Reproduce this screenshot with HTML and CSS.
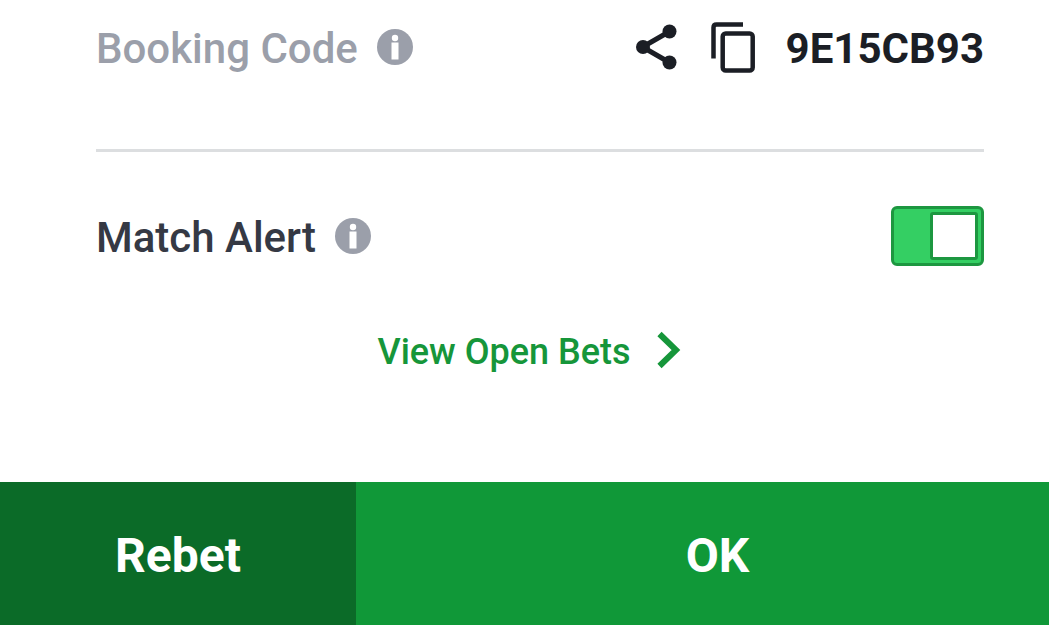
FILE: index.html
```
<!DOCTYPE html>
<html lang="en">
<head>
<meta charset="utf-8">
<meta name="viewport" content="width=device-width, initial-scale=1">
<title>Booking Code</title>
<link rel="stylesheet" href="styles.css">
</head>
<body>
<main class="sheet">
  <section class="row row-booking">
    <div class="label label-muted">
      <span class="label-text">Booking Code</span>
      <button class="icon-button" type="button" aria-label="About booking code">
        <svg class="info" viewBox="0 0 36 36"><circle cx="18" cy="18" r="18" fill="#9b9faa"/><circle cx="18" cy="9" r="3.200" fill="#fff"/><path d="M14.500 13.500h7v17h-7z" fill="#fff"/></svg>
      </button>
    </div>
    <div class="actions">
      <button class="icon-button" type="button" aria-label="Share">
        <svg class="share" viewBox="0 0 42 46"><path d="M33.500 7.500 6.500 23l27 15.500" fill="none" stroke="#1b1e25" stroke-width="5"/><g fill="#1b1e25"><circle cx="33.500" cy="7.500" r="7"/><circle cx="7" cy="23" r="7"/><circle cx="33.500" cy="38.500" r="7"/></g></svg>
      </button>
      <button class="icon-button" type="button" aria-label="Copy">
        <svg class="copy" viewBox="0 0 44 52"><g fill="none" stroke="#1b1e25"><path d="M3.500 37.500V6.500q0-3 3-3H33" stroke-width="4.500"/><rect x="12.700" y="12.500" width="30" height="37" rx="3" stroke-width="4.500"/></g></svg>
      </button>
      <span class="code">9E15CB93</span>
    </div>
  </section>
  <section class="row row-alert">
    <div class="label">
      <label class="label-text" for="match-alert">Match Alert</label>
      <button class="icon-button" type="button" aria-label="About match alert">
        <svg class="info" viewBox="0 0 36 36"><circle cx="18" cy="18" r="18" fill="#9b9faa"/><circle cx="18" cy="9" r="3.200" fill="#fff"/><path d="M14.500 13.500h7v17h-7z" fill="#fff"/></svg>
      </button>
    </div>
    <input class="switch" id="match-alert" type="checkbox" role="switch" checked>
  </section>
  <div class="link-row">
    <a class="open-bets" href="#open-bets">
      <span class="open-bets-text">View Open Bets</span>
      <svg class="chevron" viewBox="0 0 24 36"><path d="M2.500 2 19 18 2.500 34" fill="none" stroke="#16963a" stroke-width="6"/></svg>
    </a>
  </div>
</main>
<footer class="footer">
  <button class="footer-button rebet" type="button">Rebet</button>
  <button class="footer-button ok" type="button">OK</button>
</footer>
</body>
</html>
```
FILE: styles.css
```
*,
*::before {
  box-sizing: border-box;
}

body {
  margin: 0;
  min-height: 100vh;
  display: flex;
  flex-direction: column;
  background: #fff;
  color: #353944;
  font-family: Roboto, "Liberation Sans", sans-serif;
}

svg {
  display: block;
  overflow: visible;
}

button {
  border: 0;
  font-family: inherit;
  cursor: pointer;
}

.sheet {
  flex: 1;
  display: flex;
  flex-direction: column;
  padding: 0 65px 0 96px;
}

.row {
  display: flex;
  align-items: center;
  justify-content: space-between;
}

.row-booking {
  padding: 20px 0 75px;
  border-bottom: 3px solid #dcdee0;
}

.row-alert {
  padding: 54px 0 60px;
}

.label {
  display: flex;
  align-items: center;
  gap: 19px;
  font-size: 42px;
  line-height: 50px;
  font-weight: 500;
}

.label-text {
  padding-top: 4px;
}

.label-muted {
  color: #9b9faa;
}

.icon-button {
  padding: 0;
  background: none;
}

.info {
  width: 36px;
  height: 36px;
}

.actions {
  display: flex;
  align-items: center;
  gap: 32px;
}

.share {
  width: 42px;
  height: 46px;
}

.copy {
  width: 44px;
  height: 52px;
}

.code {
  padding-top: 4px;
  color: #1b1e25;
  font-size: 42px;
  line-height: 50px;
  font-weight: 700;
}

.switch {
  appearance: none;
  display: flex;
  justify-content: flex-end;
  width: 93px;
  height: 60px;
  margin: 0;
  padding: 3px;
  border: 3px solid #1d9740;
  border-radius: 6px;
  background: #34cf63;
  cursor: pointer;
}

.switch::before {
  content: "";
  width: 48px;
  height: 48px;
  border: 3px solid #1d9740;
  border-radius: 3px;
  background: #fff;
}

.switch:not(:checked) {
  justify-content: flex-start;
  background: #dcdee0;
}

.link-row {
  display: flex;
  justify-content: center;
  padding-right: 22px;
}

.open-bets {
  display: flex;
  align-items: center;
  gap: 26px;
  color: #16963a;
  font-size: 36px;
  line-height: 44px;
  font-weight: 500;
  text-decoration: none;
}

.open-bets-text {
  padding-top: 4px;
}

.chevron {
  width: 24px;
  height: 36px;
}

.footer {
  display: grid;
  grid-template-columns: 356fr 693fr;
}

.footer-button {
  padding: 46px 16px 41px;
  background: #109838;
  color: #fff;
  font-size: 48px;
  line-height: 56px;
  font-weight: 700;
}

.rebet {
  background: #0b6b28;
}

.ok {
  padding-left: 46px;
}
```
